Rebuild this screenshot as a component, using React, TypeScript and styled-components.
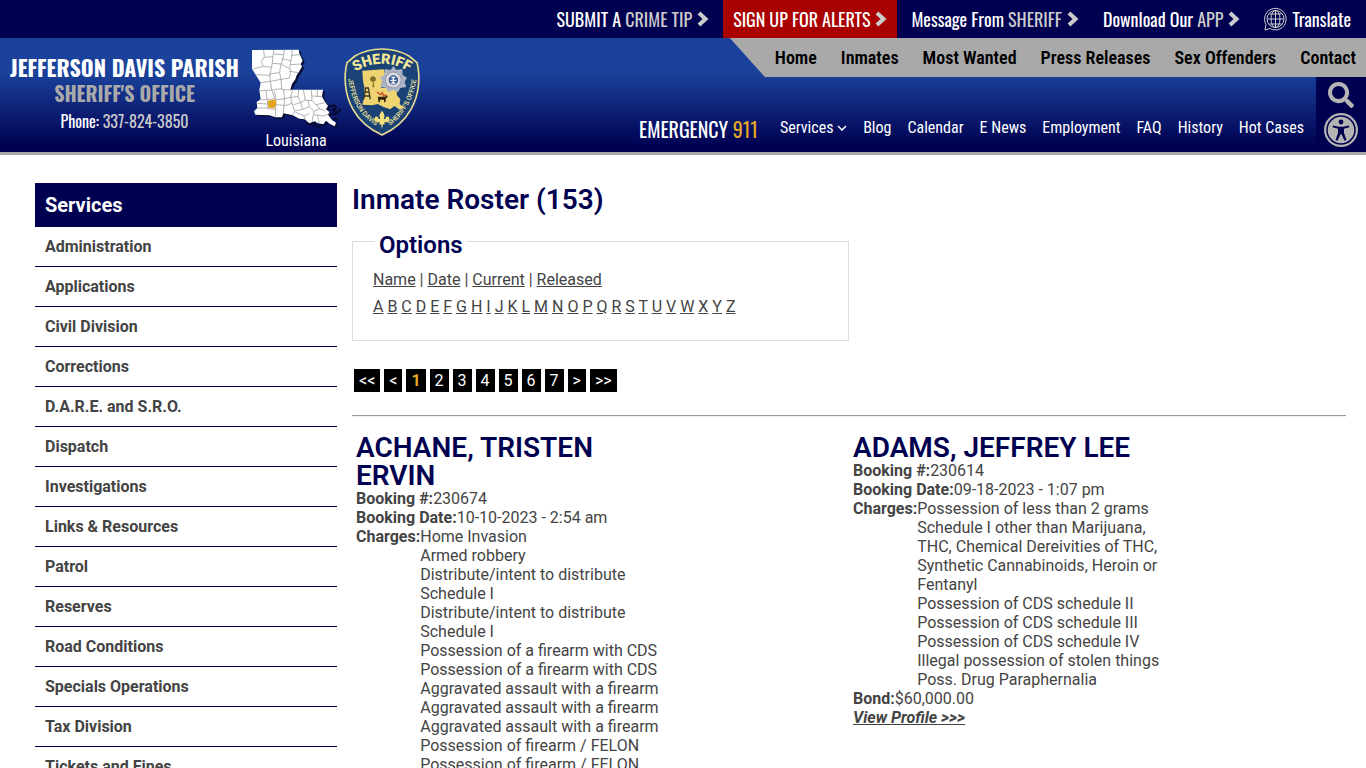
import React from 'react';
import styled, { createGlobalStyle } from 'styled-components';
import { FaSearch } from 'react-icons/fa';

const navy = '#000050';
const grey = '#a9a9a9';
const condensed = `'Roboto Condensed', 'Liberation Sans Narrow', Roboto, sans-serif`;
const display = `Oswald, 'Roboto Condensed', 'Liberation Sans Narrow', Roboto, sans-serif`;

const GlobalStyle = createGlobalStyle`
  * { box-sizing: border-box; }
  html { overflow: hidden; }
  body {
    margin: 0;
    background: #fff;
    color: #444;
    font: 16px/19px Roboto, sans-serif;
  }
  a { color: inherit; }
  h1, h2, h3, p, ul, dl, dd { margin: 0; padding: 0; }
  ul { list-style: none; }
`;

const TopBar = styled.nav`
  display: flex;
  justify-content: flex-end;
  height: 38px;
  padding-right: 5px;
  background: ${navy};
`;

const TopLink = styled.a<{ $alert?: boolean }>`
  display: flex;
  align-items: center;
  gap: 5px;
  margin-left: 4px;
  padding: 0 10px;
  color: #fff;
  background: ${p => (p.$alert ? '#a90000' : 'transparent')};
  font: 400 18px/38px ${display};
  text-decoration: none;
  white-space: nowrap;
  span { color: #ccc; }
  svg { color: #ccc; }
`;

const Header = styled.header`
  display: flex;
  justify-content: space-between;
  height: 117px;
  background: linear-gradient(#1a429b 30%, ${navy} 96%);
  border-bottom: 3px solid ${grey};
`;

const Brand = styled.div`
  display: flex;
  padding-left: 10px;
`;

const BrandText = styled.div`
  width: 229px;
  padding-top: 16px;
  color: #fff;
  text-align: center;
  white-space: nowrap;
  font-family: ${display};
`;

const BrandName = styled.div`
  font-size: 22px;
  line-height: 26px;
  font-weight: 700;
`;

const BrandOffice = styled(BrandName)`
  font-size: 20px;
  color: ${grey};
`;

const BrandPhone = styled.div`
  font-size: 16px;
  line-height: 30px;
  font-weight: 400;
  span { color: #ccc; }
`;

const MapBlock = styled.div`
  display: flex;
  flex-direction: column;
  align-items: center;
  width: 94px;
  margin-left: 10px;
  padding-top: 11px;
  color: #fff;
  font: 16px/22px ${condensed};
  svg { display: block; }
`;

const Seal = styled.svg`
  margin-top: 8px;
`;

const HeaderNav = styled.div`
  display: flex;
  flex-direction: column;
  align-items: flex-end;
`;

const PrimaryNav = styled.nav`
  display: flex;
  gap: 24px;
  height: 39px;
  padding: 0 10px 0 45px;
  background: ${grey};
  clip-path: polygon(0 0, 100% 0, 100% 100%, 35px 100%);
  a {
    color: #000;
    font: 600 18px/40px ${condensed};
    text-decoration: none;
    white-space: nowrap;
  }
`;

const SecondRow = styled.div`
  display: flex;
  flex: 1;
`;

const SecondaryNav = styled.nav`
  display: flex;
  align-items: flex-end;
  gap: 16px;
  padding: 0 12px 11px 0;
  color: #fff;
  white-space: nowrap;
  a {
    font: 16px/26px ${condensed};
    text-decoration: none;
  }
  svg { vertical-align: 2px; }
`;

const Emergency = styled.span`
  margin-right: 6px;
  font: 400 20px/24px ${display};
  em { color: #e5a823; font-style: normal; }
`;

const Tools = styled.div`
  display: flex;
  flex-direction: column;
  align-items: center;
  gap: 5px;
  width: 50px;
  padding-top: 5px;
  background: ${navy};
`;

const ToolButton = styled.button`
  display: block;
  padding: 0;
  border: 0;
  background: none;
  color: #b4b4b4;
  svg { display: block; }
`;

const Page = styled.div`
  display: flex;
  align-items: flex-start;
  gap: 15px;
  padding: 28px 20px 0 35px;
`;

const Sidebar = styled.nav`
  flex: 0 0 302px;
`;

const SidebarTitle = styled.h3`
  padding: 0 10px;
  background: ${navy};
  color: #fff;
  font-size: 20px;
  line-height: 44px;
  font-weight: 700;
`;

const SidebarItem = styled.li`
  border-bottom: 1px solid ${navy};
  a {
    display: block;
    padding: 0 10px;
    font-weight: 700;
    line-height: 39px;
    text-decoration: none;
  }
`;

const Main = styled.main`
  flex: 1;
  min-width: 0;
`;

const Title = styled.h1`
  color: ${navy};
  font-size: 28px;
  line-height: 33px;
  font-weight: 600;
`;

const Options = styled.fieldset`
  width: 50%;
  height: 118px;
  margin: 7px 0 28px;
  padding: 7px 20px;
  border: 1px solid #ddd;
  legend {
    margin-left: 2px;
    padding: 8px 4px 0;
    color: ${navy};
    font-size: 24px;
    line-height: 28px;
    font-weight: 600;
  }
  p { line-height: 27px; }
`;

const Pager = styled.nav`
  display: flex;
  gap: 4px;
  padding-left: 2px;
`;

const PageLink = styled.a<{ $current?: boolean }>`
  padding: 0 5px;
  background: #000;
  color: ${p => (p.$current ? '#e5a823' : '#fff')};
  font-weight: ${p => (p.$current ? 700 : 400)};
  line-height: 23px;
  text-decoration: none;
`;

const Rule = styled.hr`
  margin: 23px 0 17px;
  border: 0;
  border-top: 1px solid #999;
  border-bottom: 1px solid #eee;
`;

const Roster = styled.div`
  display: grid;
  grid-template-columns: 1fr 1fr;
  align-items: start;
`;

const Inmate = styled.article`
  max-width: 316px;
  padding-left: 4px;
  h2 {
    margin-bottom: -1px;
    color: ${navy};
    font-size: 28px;
    line-height: 28px;
    font-weight: 600;
  }
`;

const Field = styled.div`
  display: flex;
  dt { font-weight: 700; }
`;

const ProfileLink = styled.a`
  font-weight: 700;
  font-style: italic;
`;

const services = [
  'Administration', 'Applications', 'Civil Division', 'Corrections', 'D.A.R.E. and S.R.O.',
  'Dispatch', 'Investigations', 'Links & Resources', 'Patrol', 'Reserves', 'Road Conditions',
  'Specials Operations', 'Tax Division', 'Tickets and Fines',
];

const inmates = [
  {
    name: 'ACHANE, TRISTEN ERVIN',
    booking: '230674',
    date: '10-10-2023 - 2:54 am',
    charges: [
      'Home Invasion', 'Armed robbery', 'Distribute/intent to distribute Schedule I',
      'Distribute/intent to distribute Schedule I', 'Possession of a firearm with CDS',
      'Possession of a firearm with CDS', 'Aggravated assault with a firearm',
      'Aggravated assault with a firearm', 'Aggravated assault with a firearm',
      'Possession of firearm / FELON', 'Possession of firearm / FELON',
    ],
  },
  {
    name: 'ADAMS, JEFFREY LEE',
    booking: '230614',
    date: '09-18-2023 - 1:07 pm',
    charges: [
      'Possession of less than 2 grams Schedule I other than Marijuana, THC, Chemical Dereivities of THC, Synthetic Cannabinoids, Heroin or Fentanyl',
      'Possession of CDS schedule II', 'Possession of CDS schedule III',
      'Possession of CDS schedule IV', 'Illegal possession of stolen things',
      'Poss. Drug Paraphernalia',
    ],
    bond: '$60,000.00',
  },
];

const stateOutline =
  'M18 20L158 19L160 30L170 52L164 62L168 70L160 84L152 96L148 108L138 122L133 139L231 139L228 160L236 174L246 188L240 198L250 206L246 214L258 230L270 238L266 249L252 242L240 232L232 243L216 240L206 234L190 240L176 228L160 226L140 216L112 210L108 222L88 222L70 216L28 214L24 204L34 194L32 176L44 168L40 140L44 118L30 96L18 76Z';

const LouisianaMap = () => (
  <svg width="90" height="81" viewBox="15 17 270 243" aria-hidden="true">
    <path d={stateOutline} transform="translate(6 5)" fill="#060c38" />
    <path
      d="M240 192l24-6 6 8-10 6 12 6M250 214l22-4 12-12M180 238l12 6 18 2 16 8M262 226l14 2"
      fill="none" stroke="#060c38" strokeWidth="7"
    />
    <path d={stateOutline} fill="#fff" />
    <path
      d="M53 20l2 20-9 14 6 16-30 6M55 42l26-2 2-20M81 40l-4 32-24-3M83 32l30 2 2-14M113 34l-6 28-28-2M107 46l28 6 4-32M135 52l-5 24-26-14M138 36l24-2M132 64l34-2M77 72l-6 24-40-2M71 92l30-4 3-24M101 88l4 20 26-4 3-28M131 84l26 4M105 108l-32 6-2-20M73 114l-28 4M105 108l2 30 28 2M73 114l4 26 30-4M42 142l36-2 8 26-42 4M60 142l3 26M86 144l4 26 26-4-4-28M64 170l2 24-32 0M34 180l30 2M90 170l-2 50M90 184l24 2 2-20M66 196l24 2M114 186l-2 26M116 166l18-4 6-24M114 188l24-8-4-18M134 162l22-2 2-20M138 180l8 24-6 10M156 160l8 18-22 6M164 178l14-8-6-30M178 170l20 2-2-32M198 158l32 2M214 140l0 20M198 172l12 12 28-6M164 178l6 20-22 4M170 198l20-8-4-20M190 190l14 14-6 32M148 206l26 12 4 10M174 218l16-8M204 204l16-8 16 6M210 184l12 14M204 214l30 4 18-8M214 216l6 24"
      fill="none" stroke="#8c8c8c" strokeWidth="2"
    />
    <path d="M66 172l22-4 3 14-6 13-18-2z" fill="#dfa51e" />
  </svg>
);

const SheriffSeal = () => (
  <Seal width="80" height="92" viewBox="8 6 240 276" role="img" aria-label="Sheriff seal">
    <defs>
      <path id="seal-top" d="M36 88Q125 30 214 88" />
      <path id="seal-left" d="M23 94Q32 206 116 250" />
      <path id="seal-right" d="M136 254Q220 200 230 92" />
    </defs>
    <path
      d="M125 15C155 15 185 24 206 36L230 56C240 96 238 150 212 196Q184 246 125 273Q66 246 38 196C12 150 10 96 20 56L44 36C65 24 95 15 125 15Z"
      fill="#1a4276" stroke="#e8dc90" strokeWidth="5"
    />
    <g fill="#f3e79a" fontFamily="Roboto, sans-serif">
      <text fontSize="43" fontWeight="900"><textPath href="#seal-top" startOffset="50%" textAnchor="middle">SHERIFF</textPath></text>
      <g fontSize="20" fontWeight="500">
        <text><textPath href="#seal-left" startOffset="50%" textAnchor="middle">JEFFERSON DAVIS</textPath></text>
        <text><textPath href="#seal-right" startOffset="50%" textAnchor="middle">SHERIFF'S OFFICE</textPath></text>
      </g>
    </g>
    <path
      d="M66 80L130 76L134 90L126 112L122 132L168 132L170 154L180 166L178 180L192 192L176 196L162 186L150 196L128 188L112 180L96 184L66 182L72 160L72 130L68 110Z"
      fill="#efd472"
    />
    <path d="M96 130l2-16-8-4q-4-10 8-14 12 4 8 14l-6 4 2 16z" fill="#7d7428" />
    <path d="M70 166l6-34h8l6 34M73 156h14M75 144h10" fill="none" stroke="#3c3828" strokeWidth="4" />
    <path d="M110 144l10 8 6-6 4 10 8-4" fill="none" stroke="#c94a26" strokeWidth="4" />
    <path d="M112 158h22l6-4 2 6-5 3-2 12h-4v-8h-12v8h-4z" fill="#30260f" />
    <path
      d="M159 66l9 12 18-3 1 18 13 8-7 13 5 15-18 3-7 13-14-8-15 8-6-13-18-3 6-15-7-13 13-8 1-18 18 3z"
      fill="#aab4c4"
    />
    <circle cx="159" cy="108" r="24" fill="#d9d6d8" stroke="#8c96aa" strokeWidth="3" />
    <circle cx="159" cy="108" r="14" fill="#2d5592" />
    <path d="M153 100h12M159 98v20M150 109h18M153 117h12" fill="none" stroke="#fff" strokeWidth="4" />
    <path
      d="M125 200q-12 14-5 25h-5q-1-9-10-7-7 9 4 16 7 2 10-1l-3 8h6l3 14 3-14h6l-3-8q3 3 10 1 11-7 4-16-9-2-10 7h-5q7-11-5-25z"
      fill="#f3e07c"
    />
  </Seal>
);

const Arrow = () => (
  <svg width="12" height="16" viewBox="0 0 12 16" fill="none" stroke="currentColor" strokeWidth="4" aria-hidden="true">
    <path d="M2 2l6.500 6-6.500 6" />
  </svg>
);

const GlobeIcon = () => (
  <svg width="23" height="24" viewBox="0 0 23 24" fill="none" stroke="currentColor" aria-hidden="true">
    <path d="M2 17.500A10.800 10.800 0 1 1 6 21.500L1 23L2 17.500" />
    <path d="M11.500 3.500v17M3.500 12h16M5.500 7h12M5.500 17h12" />
    <circle cx="11.500" cy="12" r="8.500" />
    <ellipse cx="11.500" cy="12" rx="4.500" ry="8.500" />
  </svg>
);

const ServicesCaret = () => (
  <svg width="10" height="6" viewBox="0 0 10 6" fill="none" stroke="currentColor" strokeWidth="1.500" aria-hidden="true">
    <path d="M1 1l4 4 4-4" />
  </svg>
);

const Accessibility = () => (
  <svg width="34" height="34" viewBox="0 0 34 34" aria-hidden="true">
    <circle cx="17" cy="17" r="17" fill="#b4b4b4" />
    <circle cx="17" cy="17" r="14" fill="none" stroke={navy} strokeWidth="1.500" />
    <circle cx="17" cy="9" r="2.400" fill={navy} />
    <path
      d="M9 12.500l6 1.200h4l6-1.200.4 1.800-5.400 1.500v4.200l2.500 7-2 .8-3.200-6.800h-.6l-3.200 6.800-2-.8 2.500-7v-4.200l-5.400-1.500z"
      fill={navy}
    />
  </svg>
);

export default function App() {
  return (
    <>
      <GlobalStyle />
      <TopBar>
        <TopLink href="#tip"><div>SUBMIT A <span>CRIME TIP</span></div><Arrow /></TopLink>
        <TopLink href="#alerts" $alert>SIGN UP FOR ALERTS<Arrow /></TopLink>
        <TopLink href="#message"><div>Message From <span>SHERIFF</span></div><Arrow /></TopLink>
        <TopLink href="#app"><div>Download Our <span>APP</span></div><Arrow /></TopLink>
        <TopLink href="#translate"><GlobeIcon />Translate</TopLink>
      </TopBar>
      <Header>
        <Brand>
          <BrandText>
            <BrandName>JEFFERSON DAVIS PARISH</BrandName>
            <BrandOffice>SHERIFF'S OFFICE</BrandOffice>
            <BrandPhone>Phone: <span>337-824-3850</span></BrandPhone>
          </BrandText>
          <MapBlock><LouisianaMap />Louisiana</MapBlock>
          <SheriffSeal />
        </Brand>
        <HeaderNav>
          <PrimaryNav>
            {['Home', 'Inmates', 'Most Wanted', 'Press Releases', 'Sex Offenders', 'Contact'].map(t => (
              <a href="#nav" key={t}>{t}</a>
            ))}
          </PrimaryNav>
          <SecondRow>
            <SecondaryNav>
              <Emergency>EMERGENCY <em>911</em></Emergency>
              <a href="#services">Services <ServicesCaret /></a>
              {['Blog', 'Calendar', 'E News', 'Employment', 'FAQ', 'History', 'Hot Cases'].map(t => (
                <a href="#nav" key={t}>{t}</a>
              ))}
            </SecondaryNav>
            <Tools>
              <ToolButton aria-label="Search"><FaSearch size={26} /></ToolButton>
              <ToolButton aria-label="Accessibility"><Accessibility /></ToolButton>
            </Tools>
          </SecondRow>
        </HeaderNav>
      </Header>
      <Page>
        <Sidebar>
          <SidebarTitle>Services</SidebarTitle>
          <ul>
            {services.map(s => (
              <SidebarItem key={s}><a href="#service">{s}</a></SidebarItem>
            ))}
          </ul>
        </Sidebar>
        <Main>
          <Title>Inmate Roster (153)</Title>
          <Options>
            <legend>Options</legend>
            <p>
              <a href="#name">Name</a> | <a href="#date">Date</a> | <a href="#current">Current</a> | <a href="#released">Released</a>
            </p>
            <p>
              {'ABCDEFGHIJKLMNOPQRSTUVWXYZ'.split('').map(l => (
                <React.Fragment key={l}><a href="#letter">{l}</a> </React.Fragment>
              ))}
            </p>
          </Options>
          <Pager>
            {['<<', '<', '1', '2', '3', '4', '5', '6', '7', '>', '>>'].map(t => (
              <PageLink href="#page" key={t} $current={t === '1'}>{t}</PageLink>
            ))}
          </Pager>
          <Rule />
          <Roster>
            {inmates.map(i => (
              <Inmate key={i.name}>
                <h2>{i.name}</h2>
                <dl>
                  <Field><dt>Booking #:</dt><dd>{i.booking}</dd></Field>
                  <Field><dt>Booking Date:</dt><dd>{i.date}</dd></Field>
                  <Field>
                    <dt>Charges:</dt>
                    <dd>{i.charges.map((c, n) => <div key={n}>{c}</div>)}</dd>
                  </Field>
                  {i.bond && <Field><dt>Bond:</dt><dd>{i.bond}</dd></Field>}
                </dl>
                <ProfileLink href="#profile">View Profile &gt;&gt;&gt;</ProfileLink>
              </Inmate>
            ))}
          </Roster>
        </Main>
      </Page>
    </>
  );
}
